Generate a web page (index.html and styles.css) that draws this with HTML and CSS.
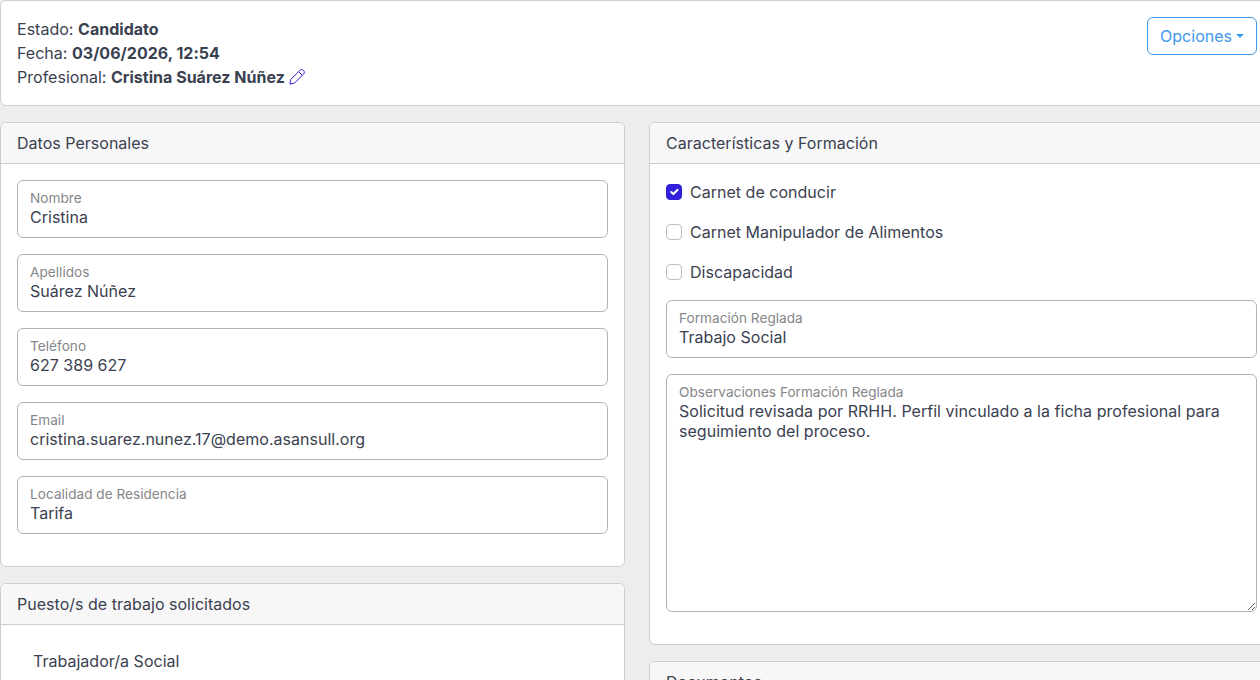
FILE: index.html
```html
<!DOCTYPE html>
<html lang="es">
<head>
<meta charset="utf-8">
<title>Candidato</title>
<link rel="stylesheet" href="styles.css">
</head>
<body>
<main class="page">
  <section class="card summary">
    <div>
      <div>Estado: <strong>Candidato</strong></div>
      <div>Fecha: <strong>03/06/2026, 12:54</strong></div>
      <div>Profesional: <strong>Cristina Suárez Núñez</strong> <svg class="edit-icon" viewBox="0 0 16 16" fill="none" stroke="currentColor" stroke-linejoin="round"><path d="M.9 15.100 1.800 10.400 10.800 1.400C12.200 0 13.600.4 14.500 1.400S15.800 3.800 14.500 5.100L5.500 14.100ZM9.800 2.800l3.400 3.400"/></svg></div>
    </div>
    <button class="options" type="button">Opciones</button>
  </section>
  <div class="columns">
    <div class="column">
      <section class="card">
        <header class="card-header">Datos Personales</header>
        <div class="card-body">
          <div class="field"><input id="nombre" type="text" value="Cristina"><label for="nombre">Nombre</label></div>
          <div class="field"><input id="apellidos" type="text" value="Suárez Núñez"><label for="apellidos">Apellidos</label></div>
          <div class="field"><input id="telefono" type="text" value="627 389 627"><label for="telefono">Teléfono</label></div>
          <div class="field"><input id="email" type="text" value="cristina.suarez.nunez.17@demo.asansull.org"><label for="email">Email</label></div>
          <div class="field"><input id="localidad" type="text" value="Tarifa"><label for="localidad">Localidad de Residencia</label></div>
        </div>
      </section>
      <section class="card">
        <header class="card-header">Puesto/s de trabajo solicitados</header>
        <div class="card-body">
          <div class="list-item">Trabajador/a Social</div>
        </div>
      </section>
    </div>
    <div class="column">
      <section class="card">
        <header class="card-header">Características y Formación</header>
        <div class="card-body">
          <label class="check"><span class="box box-checked"><svg viewBox="0 0 20 20" fill="none" stroke="#fff" stroke-width="3" stroke-linecap="round" stroke-linejoin="round"><path d="m6 10 3 3 6-6"/></svg></span>Carnet de conducir</label>
          <label class="check"><span class="box"></span>Carnet Manipulador de Alimentos</label>
          <label class="check"><span class="box"></span>Discapacidad</label>
          <div class="field"><input id="formacion" type="text" value="Trabajo Social"><label for="formacion">Formación Reglada</label></div>
          <div class="field"><textarea id="observaciones" spellcheck="false">Solicitud revisada por RRHH. Perfil vinculado a la ficha profesional para seguimiento del proceso.</textarea><label for="observaciones">Observaciones Formación Reglada</label></div>
        </div>
      </section>
      <section class="card">
        <header class="card-header">Documentos</header>
        <div class="card-body"></div>
      </section>
    </div>
  </div>
</main>
</body>
</html>
```
FILE: styles.css
```css
* { box-sizing: border-box; }

body {
  margin: 0;
  height: 680px;
  overflow: hidden;
  background: #ebedee;
  color: #3a4150;
  font: 16px/24px Inter, "Liberation Sans", sans-serif;
  letter-spacing: .02px;
}

.page {
  width: 1274px;
  height: 680px;
  overflow: hidden;
}

.card {
  margin-bottom: 16px;
  background: #fff;
  border: 1px solid #cdced1;
  border-radius: 6px;
}

.card-header {
  padding: 8px 16px;
  background: #f7f7f7;
  border-bottom: 1px solid #cdced1;
  border-radius: 5px 5px 0 0;
}

.card-body { padding: 16px; }

.summary {
  display: flex;
  justify-content: space-between;
  align-items: flex-start;
  padding: 16px;
}

.edit-icon {
  width: 16px;
  height: 16px;
  color: #321fdb;
  vertical-align: -2px;
}

.options {
  display: flex;
  align-items: center;
  gap: 4px;
  width: 110px;
  padding: 6px 12px;
  background: transparent;
  border: 1px solid #3d97ea;
  border-radius: 6px;
  color: #3d97ea;
  font: inherit;
  letter-spacing: inherit;
}

.options::after {
  content: "";
  border: 4.8px solid transparent;
  border-top-color: currentColor;
  border-bottom: 0;
}

.columns {
  display: grid;
  grid-template-columns: 625px 625px;
  gap: 24px;
}

.field {
  position: relative;
  margin-bottom: 16px;
}

.field input,
.field textarea {
  display: block;
  width: 100%;
  height: 58px;
  padding: 26px 12px 10px;
  background: #fff;
  border: 1px solid #b2b4b8;
  border-radius: 6px;
  color: #3a4150;
  font: 16px/20px Inter, "Liberation Sans", sans-serif;
  letter-spacing: inherit;
}

.field textarea {
  height: 238px;
  letter-spacing: .035px;
  resize: vertical;
}

/* Floating caption drawn over the control's top padding */
.field label {
  position: absolute;
  top: 0;
  left: 0;
  padding: 16px 12px;
  border: 1px solid transparent;
  color: #83868a;
  line-height: 24px;
  pointer-events: none;
  transform: scale(.85) translateY(-8px) translateX(2.4px);
  transform-origin: 0 0;
}

.check {
  display: flex;
  align-items: center;
  gap: 8px;
  margin-bottom: 16px;
}

.box {
  width: 16px;
  height: 16px;
  border: 1px solid #bfc0c4;
  border-radius: 4px;
}

.box-checked {
  background: #321fdb;
  border-color: #321fdb;
}

.box svg { display: block; width: 14px; height: 14px; }

.list-item { padding: 8px 16px; }
```
